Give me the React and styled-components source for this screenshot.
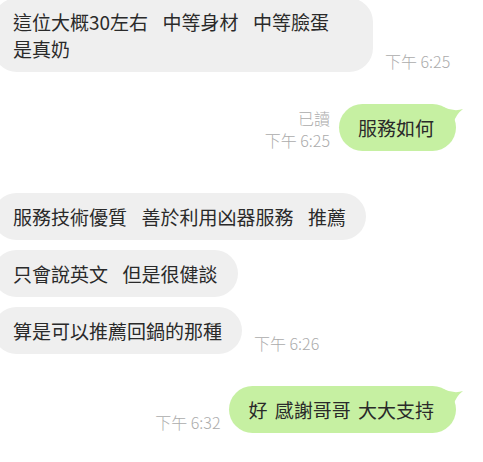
import React from "react";
import styled, { createGlobalStyle } from "styled-components";

const GlobalStyle = createGlobalStyle`
  html, body {
    margin: 0;
    padding: 0;
    background: #ffffff;
  }
  body {
    font-family: "Noto Sans CJK TC", "Noto Sans", sans-serif;
    overflow: hidden;
  }
`;

const Thread = styled.div`
  display: flex;
  flex-direction: column;
  margin: -2px 0 0 -7px;
  padding-right: 27px;
`;

const Row = styled.div`
  display: flex;
  align-items: flex-end;
  justify-content: ${(p) => (p.$mine ? "flex-end" : "flex-start")};
  gap: ${(p) => (p.$mine ? 9 : 12)}px;
  margin-top: ${(p) => p.$gap || 0}px;
`;

const Bubble = styled.div`
  position: relative;
  box-sizing: border-box;
  max-width: 380px;
  padding: ${(p) => (p.$mine ? "10px 22px 10px 19px" : "10px 20px")};
  border-radius: 24px;
  background: ${(p) => (p.$mine ? "#c6f0a2" : "#efefef")};
  color: #2a2a2a;
  font-size: 19px;
  line-height: 27px;
  white-space: pre-wrap;
  word-break: keep-all;
  word-spacing: 3px;
`;

const Tail = styled.svg`
  position: absolute;
  top: 0;
  right: -9px;
  width: 22px;
  height: 22px;
`;

const Meta = styled.div`
  display: flex;
  flex-direction: column;
  align-items: flex-end;
  font-size: 16px;
  font-weight: 300;
  line-height: 22px;
  color: #ababab;
  white-space: nowrap;
`;

const messages = [
  { id: 1, text: "這位大概30左右  中等身材  中等臉蛋 是真奶", time: "下午 6:25" },
  { id: 2, mine: true, gap: 32, text: "服務如何", time: "下午 6:25", read: true },
  { id: 3, gap: 42, text: "服務技術優質  善於利用凶器服務  推薦" },
  { id: 4, gap: 10, text: "只會說英文  但是很健談" },
  { id: 5, gap: 10, text: "算是可以推薦回鍋的那種", time: "下午 6:26" },
  { id: 6, mine: true, gap: 32, text: "好 感謝哥哥 大大支持", time: "下午 6:32" },
];

function Message({ m }) {
  const meta = m.time ? (
    <Meta>
      {m.read && <span>已讀</span>}
      <span>{m.time}</span>
    </Meta>
  ) : null;

  return (
    <Row $mine={m.mine} $gap={m.gap}>
      {m.mine && meta}
      <Bubble $mine={m.mine}>
        {m.text}
        {m.mine && (
          <Tail viewBox="0 0 22 22">
            <path d="M0 3 Q11 8 20 5 Q13 10 10 20 L0 20 Z" fill="#c6f0a2" />
          </Tail>
        )}
      </Bubble>
      {!m.mine && meta}
    </Row>
  );
}

export default function App() {
  return (
    <>
      <GlobalStyle />
      <Thread>
        {messages.map((m) => (
          <Message key={m.id} m={m} />
        ))}
      </Thread>
    </>
  );
}
